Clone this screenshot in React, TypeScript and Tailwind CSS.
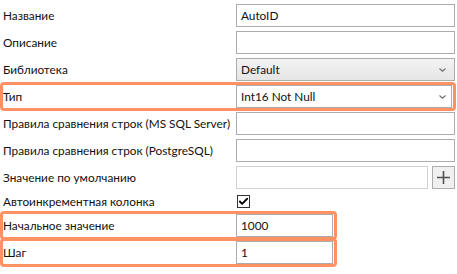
import { Check } from 'lucide-react';

const font = { fontFamily: '"Segoe UI", Lato, sans-serif' };

function Chevron() {
  return (
    <svg width="7" height="4" viewBox="0 0 7 4" className="shrink-0">
      <path d="M0.5 0.5 L3.5 3.2 L6.5 0.5" fill="none" stroke="#6d6d6d" strokeWidth="1.1" />
    </svg>
  );
}

function Row({ label, children, tall = true }: { label: string; children?: React.ReactNode; tall?: boolean }) {
  return (
    <div className={`flex items-center ${tall ? 'h-[23px]' : 'h-[17px]'}`}>
      <div className="w-[233px] shrink-0 text-[11.8px] text-[#111] leading-none whitespace-nowrap">{label}</div>
      {children}
    </div>
  );
}

function TextBox({ value = '', w = 'w-[219px]', border = 'border-[#acacac]' }: { value?: string; w?: string; border?: string }) {
  return (
    <div className={`${w} h-[23px] border ${border} bg-white flex items-center px-[4px] text-[11.8px] text-[#111]`}>
      {value}
    </div>
  );
}

export default function App() {
  return (
    <div className="relative w-[457px] h-[274px] bg-white overflow-hidden" style={font}>
      <div className="flex flex-col gap-[4px] pt-[4px] pl-[3px]">
        <Row label="Название"><TextBox value="AutoID" /></Row>
        <Row label="Описание"><TextBox /></Row>
        <Row label="Библиотека">
          <div className="w-[219px] h-[23px] border border-[#acacac] bg-gradient-to-b from-[#f3f3f3] to-[#e6e6e6] flex items-center justify-between pl-[4px] pr-[8px] text-[11.8px] text-[#111]">
            <span>Default</span>
            <Chevron />
          </div>
        </Row>
        <Row label="Тип">
          <div className="w-[216px] h-[23px] border border-[#acacac] bg-white flex items-center justify-between pl-[4px] pr-[5px] text-[11.8px] text-[#111]">
            <span>Int16 Not Null</span>
            <Chevron />
          </div>
        </Row>
        <Row label="Правила сравнения строк (MS SQL Server)"><TextBox /></Row>
        <Row label="Правила сравнения строк (PostgreSQL)"><TextBox /></Row>
        <Row label="Значение по умолчанию">
          <div className="flex gap-[4px]">
            <TextBox w="w-[192px]" border="border-[#d2d2d2]" />
            <div className="w-[23px] h-[23px] border border-[#adadad] bg-[#f0f0f0] flex items-center justify-center">
              <svg width="13" height="13" viewBox="0 0 13 13">
                <path d="M6.5 0 V13 M0 6.5 H13" stroke="#505050" strokeWidth="1.6" />
              </svg>
            </div>
          </div>
        </Row>
        <Row label="Автоинкрементная колонка" tall={false}>
          <div className="ml-[1px] w-[13px] h-[13px] border border-[#333] bg-white flex items-center justify-center">
            <Check className="w-[11px] h-[11px] text-black" strokeWidth={4} />
          </div>
        </Row>
        <Row label="Начальное значение"><TextBox value="1000" w="w-[97px]" /></Row>
        <Row label="Шаг"><TextBox value="1" w="w-[97px]" /></Row>
      </div>

      {/* highlight frames */}
      <div className="absolute left-0 top-[82px] w-[456px] h-[29px] border-[3px] border-[#ff9163] rounded-[4px] pointer-events-none" />
      <div className="absolute left-0 top-[211px] w-[337px] h-[29px] border-[3px] border-[#ff9163] rounded-[4px] pointer-events-none" />
      <div className="absolute left-0 top-[238px] w-[337px] h-[29px] border-[3px] border-[#ff9163] rounded-[4px] pointer-events-none" />
    </div>
  );
}
